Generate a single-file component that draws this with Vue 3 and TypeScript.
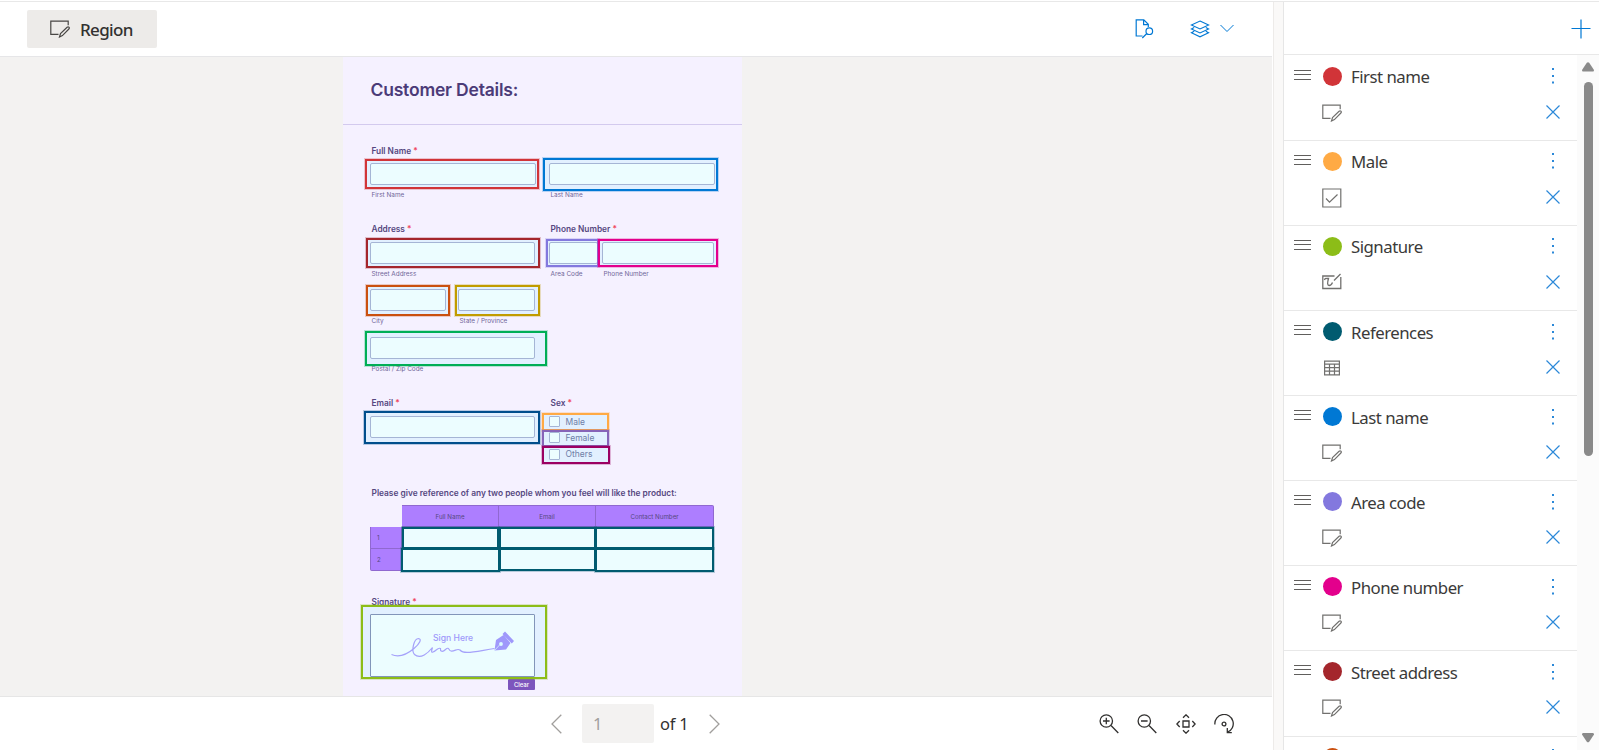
<script setup lang="ts">
interface Row { name: string; color: string; icon: 'region' | 'check' | 'sign' | 'table' }
interface Box { x: number; y: number; w: number; h: number; c: string }

const rows: Row[] = [
  { name: 'First name', color: '#d13438', icon: 'region' },
  { name: 'Male', color: '#ffaa44', icon: 'check' },
  { name: 'Signature', color: '#8cbd18', icon: 'sign' },
  { name: 'References', color: '#005b70', icon: 'table' },
  { name: 'Last name', color: '#0078d4', icon: 'region' },
  { name: 'Area code', color: '#8378de', icon: 'region' },
  { name: 'Phone number', color: '#e3008c', icon: 'region' },
  { name: 'Street address', color: '#a4262c', icon: 'region' },
  { name: '', color: '#ca5010', icon: 'region' },
]

// Labelled regions, in page coordinates
const boxes: Box[] = [
  { x: 22, y: 102, w: 174, h: 30, c: '#d13438' },
  { x: 200, y: 101, w: 175, h: 33, c: '#0078d4' },
  { x: 23, y: 181, w: 174, h: 30, c: '#a4262c' },
  { x: 203, y: 182, w: 53, h: 28, c: '#8378de' },
  { x: 255, y: 182, w: 120, h: 28, c: '#e3008c' },
  { x: 23, y: 228, w: 84, h: 31, c: '#ca5010' },
  { x: 112, y: 228, w: 85, h: 31, c: '#c19c00' },
  { x: 22, y: 274, w: 182, h: 35, c: '#00ae56' },
  { x: 21, y: 354, w: 176, h: 33, c: '#004e8c' },
  { x: 199, y: 356, w: 67, h: 18, c: '#ffaa44' },
  { x: 199, y: 373, w: 67, h: 17, c: '#8764b8' },
  { x: 199, y: 389, w: 68, h: 18, c: '#9b0062' },
  { x: 59, y: 470, w: 97, h: 22, c: '#005b70' },
  { x: 156, y: 470, w: 97, h: 22, c: '#005b70' },
  { x: 252, y: 470, w: 119, h: 22, c: '#005b70' },
  { x: 58, y: 491, w: 99, h: 24, c: '#005b70' },
  { x: 156, y: 491, w: 97, h: 23, c: '#005b70' },
  { x: 252, y: 491, w: 119, h: 24, c: '#005b70' },
  { x: 18, y: 548, w: 186, h: 74, c: '#8cbd18' },
]
</script>

<template>
  <div class="app">
    <main class="main">
      <header class="toolbar">
        <button class="region-btn">
          <svg width="20" height="18" viewBox="0 0 20 18" fill="none" stroke="#484644" stroke-width="1.2"><path d="M8.5 14.4H.8V1.2h17.4v4M9.5 17l1-3.4 6.6-6.4q1-.8 1.8 0t0 1.8l-6.5 6.6z" /></svg>
          <span>Region</span>
        </button>
        <div class="tools">
          <svg class="t-doc" width="19" height="20" viewBox="0 0 19 20" fill="none" stroke="#0078d4" stroke-width="1.2"><path d="M7.500 17H1.200V.8h7.600l4.500 4.500V8M8.600.8V5.600h4.700M7.300 19l4.500-4.500" /><circle cx="14.300" cy="12.200" r="3.300" /></svg>
          <svg class="t-layers" width="20" height="18" viewBox="0 0 20 18" fill="none" stroke="#0078d4" stroke-width="1.1"><path d="m10 1 8.600 4L10 9 1.400 5zM4.200 7.500 1.400 9 10 13l8.600-4-2.800-1.500M4.200 11.200l-2.800 1.600L10 16.800l8.600-4-2.800-1.600" /></svg>
          <svg class="t-chev" width="14" height="9" viewBox="0 0 14 9" fill="none" stroke="#0078d4" stroke-width="1"><path d="m.5 1 6.500 6.500L13.500 1" /></svg>
        </div>
      </header>

      <section class="canvas">
        <div class="page">
          <h1>Customer Details:</h1>
          <div class="grid names">
            <div class="field"><label>Full Name <i>*</i></label><b class="inp"></b><small>First Name</small></div>
            <div class="field"><label>&nbsp;</label><b class="inp"></b><small>Last Name</small></div>
          </div>
          <div class="grid addr">
            <div class="field"><label>Address <i>*</i></label><b class="inp"></b><small>Street Address</small></div>
            <div class="phone">
              <div class="field area"><label>Phone Number <i>*</i></label><b class="inp"></b><small>Area Code</small></div>
              <div class="field num"><label>&nbsp;</label><b class="inp"></b><small>Phone Number</small></div>
            </div>
          </div>
          <div class="cities">
            <div class="field"><b class="inp"></b><small>City</small></div>
            <div class="field"><b class="inp"></b><small>State / Province</small></div>
          </div>
          <div class="field zip"><b class="inp"></b><small>Postal / Zip Code</small></div>
          <div class="grid email">
            <div class="field"><label>Email <i>*</i></label><b class="inp"></b></div>
            <div class="field sex">
              <label>Sex <i>*</i></label>
              <p><b class="cb"></b>Male</p>
              <p><b class="cb"></b>Female</p>
              <p><b class="cb"></b>Others</p>
            </div>
          </div>
          <label class="ask">Please give reference of any two people whom you feel will like the product:</label>
          <div class="table">
            <span class="blank"></span><span class="th">Full Name</span><span class="th">Email</span><span class="th last">Contact Number</span>
            <span class="rn">1</span><span class="td"></span><span class="td"></span><span class="td"></span>
            <span class="rn end">2</span><span class="td"></span><span class="td"></span><span class="td"></span>
          </div>
          <label class="siglabel">Signature <i>*</i></label>
          <div class="sig">
            <svg width="163" height="61" viewBox="0 0 163 61">
              <text x="62" y="25.500" class="sign-here">Sign Here</text>
              <path d="M20.500 39.500c8 3.500 16-.5 22.500-6 6-5 8-9.500 4.500-10-4.500 0-7.500 12-4 16 6 5.500 14-2 18-7-1 3-1.500 5.500.5 4.500 3-1 5-5 7.500-3.500-.5 3 2 4 5 1 4-3.500 3 1.500 5.500 1.500 4 .5 6-3 9-1 4 4.500 12 2 34.500-1.500" fill="none" stroke="#b39dfa" stroke-width="1.200" />
              <path d="M123.500 35.500 125 25l7.500-5 7 8-4.500 6.500zM131.500 19l2.500-2.500 9 9.500-2.200 2.500z" fill="#ac92fb" /><circle cx="130" cy="29" r="1.900" fill="#ecfcff" /><path d="m123.500 35.500 5.500-6" stroke="#ecfcff" stroke-width=".7" />
            </svg>
          </div>
          <span class="clear">Clear</span>
          <div v-for="(b, i) in boxes" :key="i" class="box" :style="{ left: b.x + 'px', top: b.y + 'px', width: b.w + 'px', height: b.h + 'px', color: b.c }"></div>
        </div>
      </section>

      <footer class="bottom">
        <div class="pager">
          <svg width="11" height="20" viewBox="0 0 11 20" fill="none" stroke="#a19f9d" stroke-width="1.300"><path d="M10.300.7 1 10l9.300 9.300" /></svg>
          <span class="pg">1</span>
          <span class="of">of 1</span>
          <svg width="11" height="20" viewBox="0 0 11 20" fill="none" stroke="#a19f9d" stroke-width="1.300"><path d="M.7.7 10 10 .7 19.300" /></svg>
        </div>
        <div class="zoom">
          <svg width="20" height="20" viewBox="0 0 20 20" fill="none" stroke="#323130" stroke-width="1.300"><circle cx="7.300" cy="7" r="6.200" /><path d="m12 11.500 7.300 7.500M4 7h6.600M7.300 3.700v6.600" /></svg>
          <svg width="20" height="20" viewBox="0 0 20 20" fill="none" stroke="#323130" stroke-width="1.300"><circle cx="7.300" cy="7" r="6.200" /><path d="m12 11.500 7.300 7.500M4 7h6.600" /></svg>
          <svg width="20" height="20" viewBox="0 0 20 20" fill="none" stroke="#323130" stroke-width="1.300"><path d="M7 7h6v6H7zM7 3.700l3-2.900 3 2.900M7 16.300l3 2.900 3-2.900M3.700 7 .9 10l2.800 3M16.300 7l2.800 3-2.800 3" /></svg>
          <svg width="20" height="20" viewBox="0 0 20 20" fill="none" stroke="#323130" stroke-width="1.300"><path d="M.9 10.500a9.200 9.200 0 1 1 12.600 7.700M13.300 14v4.700h4.500" /><circle cx="10" cy="10" r="1.900" /></svg>
        </div>
      </footer>
    </main>

    <aside class="side">
      <header class="side-head">
        <svg width="20" height="20" viewBox="0 0 20 20" stroke="#0078d4" stroke-width="1.200"><path d="M10 .5v19M.5 9.500h19" /></svg>
      </header>
      <div class="side-body">
        <ul>
          <li v-for="r in rows" :key="r.color">
            <svg class="grip" width="17" height="10" viewBox="0 0 17 10" stroke="#605e5c"><path d="M0 .5h17M0 4.500h17M0 9.500h17" /></svg>
            <span class="dot" :style="{ background: r.color }"></span>
            <span class="name">{{ r.name }}</span>
            <svg class="more" width="14" height="16" viewBox="0 0 14 16" fill="#2b88d8"><path d="M6 0h2v2H6zM6 7h2v2H6zM6 13.500h2v2H6z" /></svg>
            <span class="kind">
              <svg v-if="r.icon === 'region'" width="20" height="18" viewBox="0 0 20 18" fill="none" stroke="#71706e" stroke-width="1.200"><path d="M8.500 14.400H.8V1.200h17.400v4M9.500 17l1-3.400 6.600-6.400q1-.8 1.800 0t0 1.800l-6.500 6.600z" /></svg>
              <svg v-else-if="r.icon === 'check'" class="chk" width="20" height="20" viewBox="0 0 20 20" fill="none" stroke="#71706e" stroke-width="1.200"><path d="M.8 1h18v18H.8zM4 10.500l3.500 3.700L15.500 6.500" /></svg>
              <svg v-else-if="r.icon === 'sign'" class="sgn" width="20" height="17" viewBox="0 0 20 17" fill="none" stroke="#71706e" stroke-width="1.300"><path d="M12.500 3H.8v12.500h18V4M18.500 1l-6.500 6.500M2.500 7q.5-2 2.200-1.500h1.800q-2 7 .6 7 2.200 0 3.400-3" /></svg>
              <svg v-else class="tbl" width="16" height="16" viewBox="0 0 16 16" fill="none" stroke="#71706e" stroke-width="1.200"><path d="M.6 1.200h14.800v13.600H.6zM.6 4.200h14.800M.6 7.600h14.800M.6 11.200h14.800M5.500 4.200v10.600M10.500 4.200v10.600" /></svg>
            </span>
            <svg class="x" width="14" height="14" viewBox="0 0 14 14" stroke="#2b88d8" stroke-width="1.200"><path d="m.5.5 13 13M13.500.5l-13 13" /></svg>
          </li>
        </ul>
        <div class="scroll">
          <svg width="12" height="10" viewBox="0 0 12 10" fill="#8a8a8a"><path d="M4.800.8q1.200-1.300 2.400 0L12 8q0 1.500-1 1.500H1Q0 9.500 0 8z" /></svg>
          <i class="thumb"></i>
          <svg width="12" height="10" viewBox="0 0 12 10" fill="#8a8a8a"><path d="M4.800 8.700q1.200 1.300 2.400 0L12 1.500Q12 0 11 0H1Q0 0 0 1.500z" /></svg>
        </div>
      </div>
    </aside>
  </div>
</template>

<style>
body { overflow: hidden; background: #fff; }
</style>

<style scoped>
* { box-sizing: border-box; }
svg { display: block; flex: none; }
.app { display: flex; position: relative; width: 1599px; height: 750px; overflow: hidden; padding-top: 2px; font-family: "Noto Sans", "Open Sans", sans-serif; background: linear-gradient(#e8e8e8, #e8e8e8) 0 1px / 100% 1px no-repeat #fff; }
.main { display: flex; flex-direction: column; flex: none; width: 1274px; border-right: 1px solid #edebe9; }
.toolbar { display: flex; justify-content: space-between; height: 55px; border-bottom: 1px solid #e6e6e8; padding: 8px 38px 0 27px; width: 1272px; }
.region-btn { display: flex; align-items: center; gap: 10px; width: 130px; height: 38px; padding: 0 0 0 23px; border: 0; border-radius: 2px; background: #edebe9; color: #323130; font: 500 17px "Noto Sans", sans-serif; letter-spacing: -.65px; }
.tools { display: flex; padding-top: 9px; }
.t-layers { margin: 1px 10px 0 36px; }
.t-chev { margin-top: 5px; }
.canvas { width: 1272px; height: 639px; background: #f3f2f1; padding-left: 343px; overflow: hidden; }
.page { position: relative; width: 399px; height: 640px; background: #f5f1ff; color: #56487f; font-family: Inter, sans-serif; }
.page i { color: #f0455c; font-style: normal; }
h1 { margin: 0 0 22px; height: 68px; padding: 21px 0 0 27.500px; border-bottom: 1px solid #d3caee; color: #4b3b78; font-size: 17.500px; letter-spacing: -.2px; line-height: 24px; font-weight: 600; }
label { display: block; height: 17px; padding-left: 1.500px; font-size: 8.300px; line-height: 10px; font-weight: 600; white-space: nowrap; }
.grid { display: grid; grid-template-columns: 166px 166px; column-gap: 13px; margin-left: 27px; }
.field { min-width: 0; }
.inp { display: block; height: 22px; background: #fff; border: 1px solid #b3b2d2; border-radius: 2px; }
small { display: block; padding: 5px 0 0 1.500px; font-size: 6.400px; line-height: 10px; color: #71679a; white-space: nowrap; }
.names { height: 78px; margin-top: -1px; }
.addr { height: 65px; }
.addr .field { width: 165px; }
.phone { display: flex; gap: 4px; }
.phone .area { width: 49px; }
.phone .num { width: 112px; }
.addr label { height: 18px; }
.cities { display: grid; grid-template-columns: 76px 77px; column-gap: 12px; margin-left: 27px; height: 48px; }
.zip { width: 165px; margin-left: 27px; height: 60px; }
.email { height: 91px; padding-top: 1px; }
.email .field:first-child { width: 165px; }
.email label { height: 18px; }
.sex p { display: flex; align-items: center; height: 11px; margin: 0 0 5.400px; font-size: 8.500px; color: #77779f; }
.cb { width: 11px; height: 11px; margin-right: 5.500px; background: #fff; border: 1px solid #b3b2d2; border-radius: 1px; }
.ask { margin-left: 27px; height: 17px; font-size: 8.360px; }
.table { display: grid; grid-template-columns: 32px 97px 97px 118px; grid-template-rows: 22px 22px 22px; margin-left: 27px; font-size: 6.200px; line-height: 21px; }
.th { background: #ad7eff; border: 1px solid #9068d0; border-left-width: 0; text-align: center; }
.th.last { border-radius: 0 2px 0 0; }
.td { background: #fff; }
.rn { background: #ad7eff; padding-left: 6px; border: 1px solid #9068d0; border-top: 0; }
.rn.end { border-radius: 0 0 0 2px; }
.siglabel { margin: 26px 0 0 27px; height: 17px; }
.sig { margin-left: 27px; width: 165px; height: 63px; background: #fff; border: 1px solid #8d8fb4; border-radius: 1px; }
.sign-here { font: 500 8.600px Inter, sans-serif; fill: #ac92fb; }
.clear { display: block; margin: 2px 0 0 165px; width: 27px; height: 11px; border-radius: 1px; background: #7d55bd; color: #fff; font-size: 6px; font-weight: 500; line-height: 11px; text-align: center; }
.box { position: absolute; border: 2px solid; background: rgba(0, 225, 255, .075); }
.box::after { content: ""; position: absolute; inset: -3px; border: 1px solid; opacity: .25; }
.bottom { display: flex; justify-content: space-between; align-items: flex-start; width: 1272px; height: 54px; border-top: 1px solid #e6e6e6; padding: 0 38px 0 551px; }
.pager { display: flex; align-items: center; padding-top: 7px; }
.pg { width: 72px; height: 39px; margin: 0 6px 0 20px; padding-left: 11px; line-height: 40px; border-radius: 2px; background: #f3f2f1; color: #a19f9d; font-size: 16.500px; }
.of { width: 49px; font-size: 16.500px; color: #323130; letter-spacing: -.2px; }
.zoom { display: flex; gap: 18.500px; padding-top: 16.500px; }
.side { display: flex; flex-direction: column; flex: 1; border-left: 9px solid #faf9f8; }
.side-head { height: 53px; border-bottom: 1px solid #e8e8e8; border-left: 1px solid #e6e6e6; padding: 17px 0 0 287px; }
.side-body { display: flex; height: 695px; border-left: 1px solid #e6e6e6; overflow: hidden; }
ul { list-style: none; margin: 0; padding: .7px 0 0; width: 293px; flex: none; }
li { display: grid; grid-template-columns: 28px 29px 180px 1fr; grid-template-rows: 41px 44.120px; align-items: center; height: 85.120px; padding-left: 10px; border-bottom: 1px solid #e8e8e8; }
.grip { align-self: start; margin-top: 14px; }
.dot { width: 19px; height: 19px; border-radius: 50%; margin-left: 1px; }
.name { font-size: 16.800px; color: #3b3a39; white-space: nowrap; letter-spacing: -.5px; padding-top: 1px; }
.more, .x { justify-self: end; margin-right: 17px; }
.kind { grid-column: 2; align-self: start; margin-top: 7px; }
.chk, .sgn { margin-top: -1px; }
.tbl { margin: 1px 0 0 2px; }
.x { grid-column: 4; align-self: start; margin-top: 8px; }
.scroll { display: flex; flex-direction: column; align-items: center; width: 22px; background: #fbfbfb; padding: 7px 0 7px; }
.thumb { width: 9px; height: 374px; margin: 10px 0 auto; border-radius: 5px; background: #8a8a8a; }
</style>
